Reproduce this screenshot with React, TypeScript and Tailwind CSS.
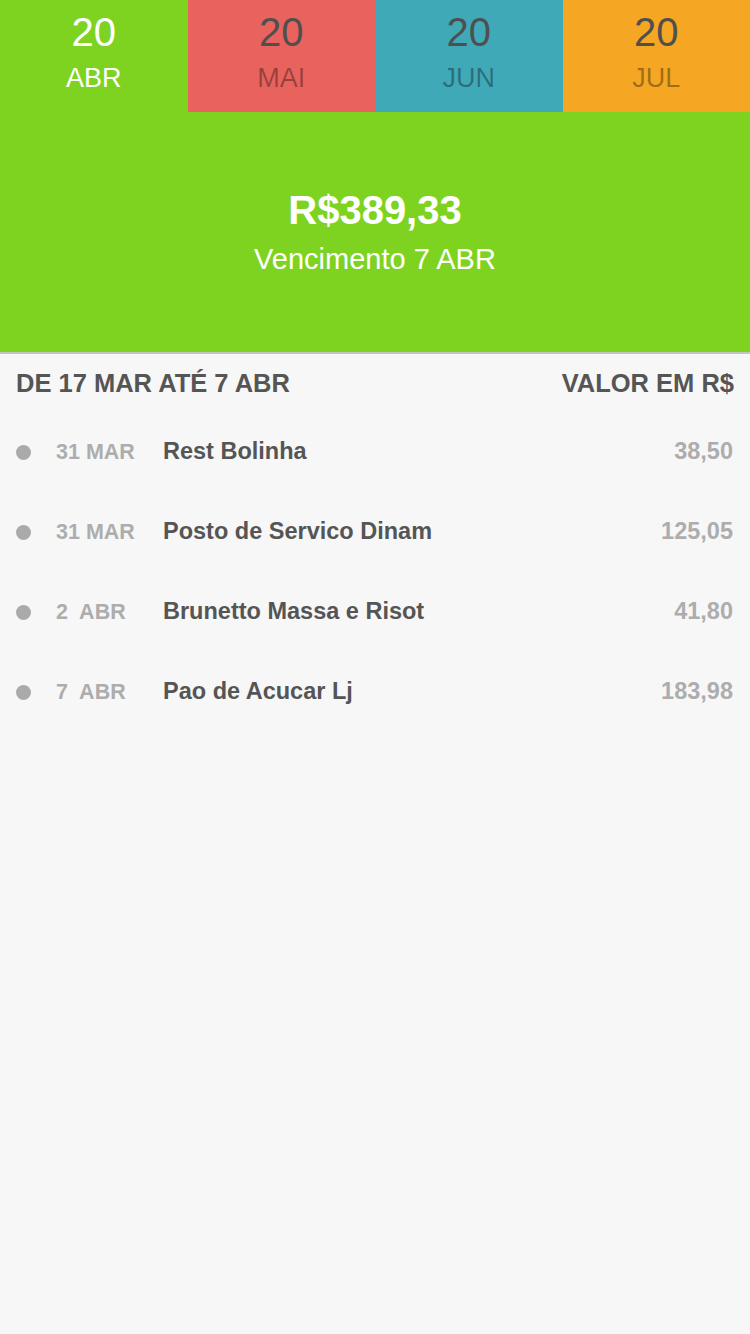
import React from 'react'

const months = [
  { day: '20', label: 'ABR', bg: 'bg-[#7ed321]', active: true },
  { day: '20', label: 'MAI', bg: 'bg-[#e8635e]', active: false },
  { day: '20', label: 'JUN', bg: 'bg-[#40a9b8]', active: false },
  { day: '20', label: 'JUL', bg: 'bg-[#f5a623]', active: false },
]

const items = [
  { date: '31 MAR', name: 'Rest Bolinha', value: '38,50' },
  { date: '31 MAR', name: 'Posto de Servico Dinam', value: '125,05' },
  { date: '2  ABR', name: 'Brunetto Massa e Risot', value: '41,80' },
  { date: '7  ABR', name: 'Pao de Acucar Lj', value: '183,98' },
]

export default function App() {
  return (
    <div className="min-h-[1334px] w-[750px] bg-[#f7f7f7] font-['Liberation_Sans',Arial,sans-serif]">
      <div className="grid grid-cols-4 h-[112px]">
        {months.map((m) => (
          <div key={m.label} className={`${m.bg} flex flex-col items-center pt-[10px]`}>
            <span className={`text-[40px] leading-[44px] ${m.active ? 'text-white' : 'text-[#4f4f4f]'}`}>
              {m.day}
            </span>
            <span className={`text-[27px] leading-[34px] mt-[7px] ${m.active ? 'text-white' : 'text-black/35'}`}>
              {m.label}
            </span>
          </div>
        ))}
      </div>

      <div className="h-[240px] bg-[#7ed321] flex flex-col items-center pt-[75px] text-white">
        <span className="text-[40px] leading-[46px] font-bold">R$389,33</span>
        <span className="text-[29px] leading-[36px] mt-[8px]">Vencimento 7 ABR</span>
      </div>
      <div className="h-[2px] bg-[#c4c4c4]" />

      <div className="flex justify-between items-center px-[16px] h-[58px] text-[25.5px] font-bold text-[#555]">
        <span>DE 17 MAR ATÉ 7 ABR</span>
        <span>VALOR EM R$</span>
      </div>

      <div className="flex flex-col">
        {items.map((it, i) => (
          <div key={i} className="flex items-center h-[80px] pl-[16px] pr-[17px]">
            <span className="w-[15px] h-[15px] rounded-full bg-[#aaaaaa]" />
            <span className="ml-[25px] w-[107px] whitespace-pre text-[21.5px] font-bold text-[#adadad]">{it.date}</span>
            <span className="flex-1 text-[23.5px] font-bold text-[#555]">{it.name}</span>
            <span className="text-[23.5px] font-bold text-[#adadad]">{it.value}</span>
          </div>
        ))}
      </div>
    </div>
  )
}
